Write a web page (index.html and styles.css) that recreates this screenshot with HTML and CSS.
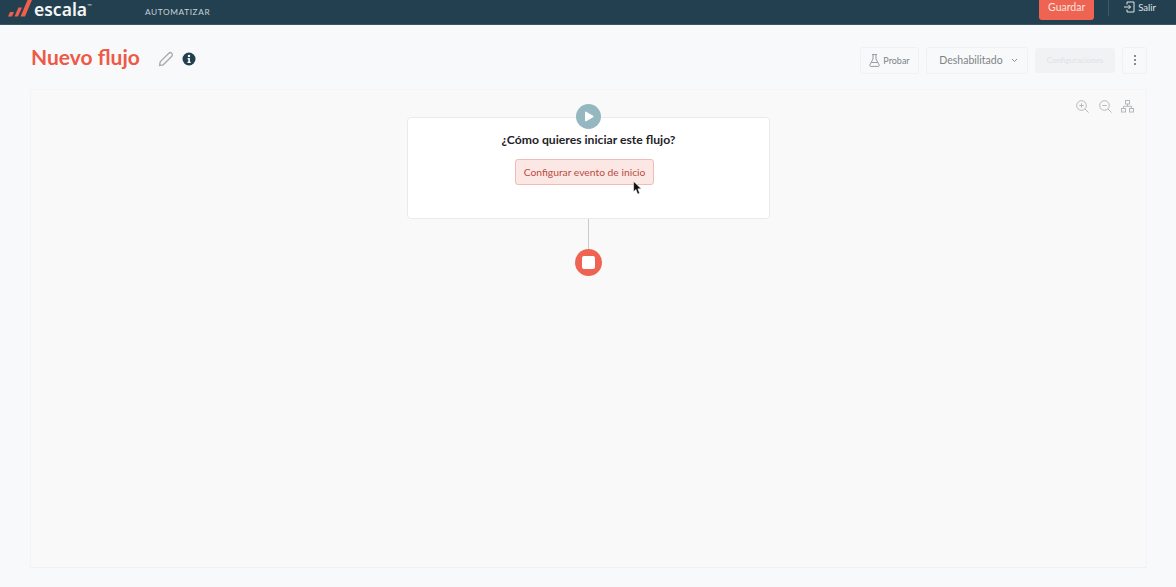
FILE: index.html
```html
<!DOCTYPE html>
<html>
  <head>
    <title>Nuevo flujo</title>
    <link rel="stylesheet" href="styles.css">
  </head>
  <body>
    <nav class="navbar">
      <div class="brand">
        <svg class="brand-mark" width="24" height="17" viewBox="0 0 24 17">
          <path d="M0 16.5 L2 12 H6 L4 16.5 Z M6.5 16.5 L10.5 7.5 H14 L10 16.5 Z M12.5 16.5 L19.5 0 H24 L17 16.5 Z" fill="#ee5f4e"/>
        </svg>
        <span class="brand-name">escala</span><span class="brand-tm">™</span>
      </div>
      <a class="nav-link">AUTOMATIZAR</a>
      <div class="nav-right">
        <button class="save-button">Guardar</button>
        <span class="nav-divider"></span>
        <a class="logout">
          <svg width="12" height="12" viewBox="0 0 12 12" fill="none" stroke="#dfe5e8" stroke-width="1">
            <path d="M4 3.5V1H11V11H4V8.5M1 6H7.5M5.5 4L7.5 6L5.5 8"/>
          </svg>
          Salir
        </a>
      </div>
    </nav>

    <header class="page-header">
      <div class="title-group">
        <h1 class="page-title">Nuevo flujo</h1>
        <svg class="edit-icon" width="16" height="16" viewBox="0 0 16 16" fill="none" stroke="#a9a9a9" stroke-width="1.3">
          <path d="M1.6 14.4L2.2 10.8L10.8 2.2C11.6 1.4 12.8 1.4 13.6 2.2C14.6 3 14.6 4.4 13.8 5.2L5.2 13.8Z"/>
        </svg>
        <svg class="info-icon" width="14" height="14" viewBox="0 0 14 14">
          <circle cx="7" cy="7" r="6.5" fill="#22404f"/>
          <circle cx="7" cy="3.9" r="1.2" fill="#fff"/>
          <path d="M5.6 6H7.9V9.8H8.7V11H5.5V9.8H6.3V7.2H5.6Z" fill="#fff"/>
        </svg>
      </div>
      <div class="actions">
        <button class="action-button test-button">
          <svg width="11" height="13" viewBox="0 0 11 13" fill="none" stroke="#8b8f93" stroke-width="0.9">
            <path d="M3 .6H8M4 .6V5L.8 11C.5 11.7.9 12.4 1.6 12.4H9.4C10.1 12.4 10.5 11.7 10.2 11L7 5V.6M2.4 8.5H8.6"/>
          </svg>
          Probar
        </button>
        <button class="action-button status-button">
          Deshabilitado
          <svg width="7" height="5" viewBox="0 0 7 5" fill="none" stroke="#8b8f93" stroke-width="1">
            <path d="M1 1L3.5 3.6L6 1"/>
          </svg>
        </button>
        <button class="config-button">Configuraciones</button>
        <button class="action-button more-button">
          <span class="dot"></span><span class="dot"></span><span class="dot"></span>
        </button>
      </div>
    </header>

    <main class="canvas">
      <div class="canvas-tools">
        <svg width="13" height="13" viewBox="0 0 13 13" fill="none" stroke="#b5b8bb" stroke-width="1">
          <circle cx="5.5" cy="5.5" r="4.8"/>
          <path d="M9 9L12.6 12.6M3.3 5.5H7.7M5.5 3.3V7.7"/>
        </svg>
        <svg width="13" height="13" viewBox="0 0 13 13" fill="none" stroke="#b5b8bb" stroke-width="1">
          <circle cx="5.5" cy="5.5" r="4.8"/>
          <path d="M9 9L12.6 12.6M3.3 5.5H7.7"/>
        </svg>
        <svg width="13" height="13" viewBox="0 0 13 13" fill="none" stroke="#b5b8bb" stroke-width="1">
          <rect x="4.5" y=".5" width="4" height="3.5"/>
          <rect x=".5" y="8.5" width="4" height="3.5"/>
          <rect x="8.5" y="8.5" width="4" height="3.5"/>
          <path d="M6.5 4V6.3M2.5 8.5V6.3H10.5V8.5"/>
        </svg>
      </div>

      <div class="flow">
        <div class="start-node">
          <svg width="10" height="11" viewBox="0 0 10 11"><path d="M1 1.4C1 .7 1.7.3 2.3.7L9 4.7C9.6 5.1 9.6 5.9 9 6.3L2.3 10.3C1.7 10.7 1 10.3 1 9.6Z" fill="#fff"/></svg>
        </div>
        <section class="trigger-card">
          <h2 class="trigger-title">¿Cómo quieres iniciar este flujo?</h2>
          <button class="trigger-button">Configurar evento de inicio</button>
          <svg class="cursor" width="9" height="14" viewBox="0 0 9 14">
            <path d="M.6.4V10.6L3 8.5L4.6 13L6.6 12.2L4.9 7.8H8.3Z" fill="#111" stroke="#fff" stroke-width=".5"/>
          </svg>
        </section>
        <div class="connector"></div>
        <div class="end-node"><span class="end-square"></span></div>
      </div>
    </main>
  </body>
</html>
```

FILE: styles.css
```css
body {
  font-family: Lato, "Noto Sans", sans-serif;
  background-color: #f8f9fa;
  color: #222;
  margin: 0;
  height: 587px;
  overflow: hidden;
}

button {
  font-family: inherit;
}

.navbar {
  display: flex;
  align-items: flex-start;
  height: 24px;
  background-color: #22404f;
  border-bottom: 1px solid #3b5562;
  color: #dfe5e8;
}

.brand {
  display: flex;
  align-items: flex-start;
  width: 145px;
  height: 24px;
  padding-left: 8px;
  box-sizing: border-box;
}

.brand-name {
  margin-left: 2px;
  font-family: "Noto Sans", sans-serif;
  font-size: 17.5px;
  line-height: 18px;
  font-weight: 600;
  color: #f4f6f7;
}

.brand-tm {
  margin-top: 2px;
  font-size: 6px;
  line-height: 8px;
  color: #cfd6da;
}

.nav-link {
  margin-top: 7px;
  font-size: 8.3px;
  line-height: 11px;
  letter-spacing: 0.6px;
  color: #c8d1d6;
}

.nav-right {
  display: flex;
  align-items: flex-start;
  margin-left: auto;
}

.save-button {
  width: 55px;
  height: 20px;
  padding: 0 0 7px;
  background-color: #ee6352;
  color: #fbe3df;
  border: none;
  border-radius: 0 0 3px 3px;
  font-size: 10.5px;
}

.nav-divider {
  width: 1px;
  height: 16px;
  margin-left: 14px;
  background-color: #3f5a67;
}

.logout {
  display: flex;
  align-items: center;
  gap: 3px;
  height: 14px;
  margin: 0 20px 0 14px;
  font-size: 9.5px;
}

.page-header {
  display: flex;
  align-items: center;
  justify-content: space-between;
  height: 64px;
  padding: 0 29px 0 31px;
}

.title-group {
  display: flex;
  align-items: center;
}

.page-title {
  margin: 0 0 2px;
  width: 127px;
  font-size: 21px;
  font-weight: 700;
  color: #ee5a48;
}

.edit-icon {
  margin-top: 4px;
}

.info-icon {
  margin: 4px 0 0 8px;
}

.actions {
  display: flex;
  align-items: center;
  gap: 7px;
  margin-top: 6px;
}

.action-button {
  display: flex;
  align-items: center;
  justify-content: center;
  height: 27px;
  padding: 0;
  background-color: #f8f9fa;
  border: 1px solid #f0f1f3;
  border-radius: 3px;
  color: #7f8387;
}

.test-button {
  width: 59px;
  gap: 3px;
  font-size: 9px;
}

.status-button {
  width: 102px;
  gap: 8px;
  padding-left: 3px;
  font-size: 10.5px;
}

.config-button {
  width: 80px;
  height: 25px;
  padding: 0;
  background-color: #f1f2f4;
  border: none;
  border-radius: 3px;
  color: #e0e2e4;
  font-size: 8px;
  white-space: nowrap;
}

.more-button {
  flex-direction: column;
  gap: 2px;
  width: 25px;
}

.dot {
  width: 2px;
  height: 2px;
  border-radius: 50%;
  background-color: #666;
}

.canvas {
  position: relative;
  display: flex;
  justify-content: center;
  width: 1117px;
  height: 479px;
  margin-left: 30px;
  background-color: #f9f9fa;
  border: 1px solid #f4f4f5;
  border-bottom-color: #f0f0f2;
  box-sizing: border-box;
}

.canvas-tools {
  position: absolute;
  top: 10px;
  right: 12px;
  display: flex;
  gap: 9.5px;
}

.flow {
  display: flex;
  flex-direction: column;
  align-items: center;
  padding-top: 14px;
}

.start-node {
  display: flex;
  align-items: center;
  justify-content: center;
  width: 25px;
  height: 25px;
  margin-bottom: -12px;
  border-radius: 50%;
  background-color: #95b7c0;
  position: relative;
  z-index: 1;
}

.trigger-card {
  position: relative;
  display: flex;
  flex-direction: column;
  align-items: center;
  box-sizing: border-box;
  width: 363px;
  height: 102px;
  padding-top: 14px;
  background-color: #fff;
  border: 1px solid #e8ebee;
  border-radius: 4px;
}

.trigger-title {
  margin: 0;
  font-size: 12.2px;
  line-height: 16px;
  font-weight: 700;
  color: #1e2226;
}

.trigger-button {
  width: 139px;
  height: 26px;
  margin: 11px 8px 0 0;
  padding: 0;
  background-color: #fbe8e5;
  border: 1px solid #f0bdb6;
  border-radius: 3px;
  color: #bb4a40;
  font-size: 10.3px;
}

.cursor {
  position: absolute;
  left: 225px;
  top: 63px;
}

.connector {
  width: 1px;
  height: 30px;
  background-color: #c9cbcd;
}

.end-node {
  display: flex;
  align-items: center;
  justify-content: center;
  width: 27px;
  height: 27px;
  border-radius: 50%;
  background-color: #ee6352;
}

.end-square {
  width: 13px;
  height: 13px;
  border-radius: 2px;
  background-color: #fff;
}
```
